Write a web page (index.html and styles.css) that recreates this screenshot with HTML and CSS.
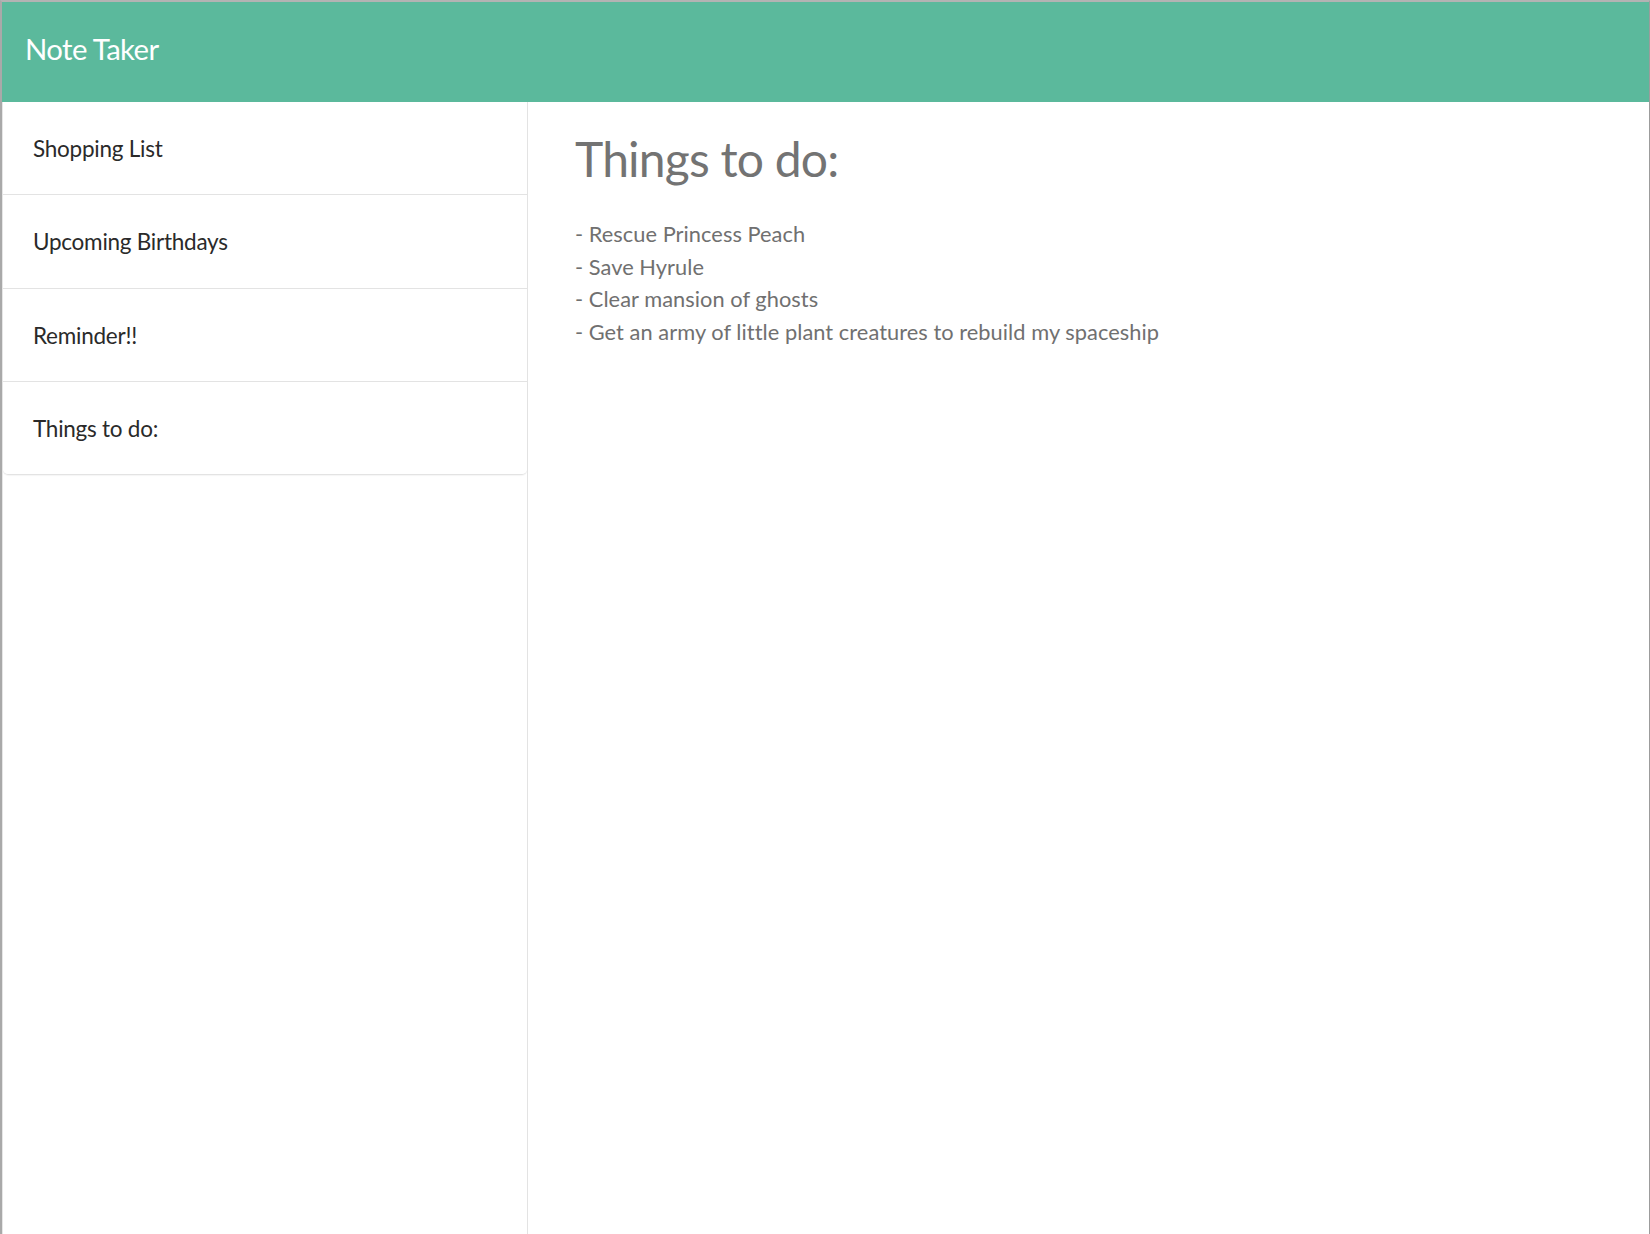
FILE: index.html
```html
<!DOCTYPE html>
<html lang="en">
<head>
<meta charset="utf-8">
<title>Note Taker</title>
<link rel="stylesheet" href="styles.css">
</head>
<body>
<div class="frame">
  <header class="navbar">
    <span class="brand">Note Taker</span>
  </header>
  <div class="content">
    <aside class="sidebar">
      <ul class="note-list">
        <li class="note-item">Shopping List</li>
        <li class="note-item">Upcoming Birthdays</li>
        <li class="note-item">Reminder!!</li>
        <li class="note-item">Things to do:</li>
      </ul>
    </aside>
    <main class="note-view">
      <h1 class="note-title">Things to do:</h1>
      <div class="note-body">
        <p class="note-line">- Rescue Princess Peach</p>
        <p class="note-line">- Save Hyrule</p>
        <p class="note-line">- Clear mansion of ghosts</p>
        <p class="note-line">- Get an army of little plant creatures to rebuild my spaceship</p>
      </div>
    </main>
  </div>
</div>
</body>
</html>
```

FILE: styles.css
```css
* {
  box-sizing: border-box;
}

html, body {
  margin: 0;
  padding: 0;
  height: 100%;
  background: #ffffff;
}

body {
  font-family: Lato, "Open Sans", "Liberation Sans", sans-serif;
}

.frame {
  height: 1234px;
  display: flex;
  flex-direction: column;
  border-top: 2px solid #b3b3b3;
  border-left: 2px solid #a9a9a9;
  border-right: 1px solid #9c9c9c;
}

.navbar {
  height: 100px;
  flex: 0 0 100px;
  background: #5bb99c;
  display: flex;
  align-items: center;
  padding-left: 23px;
  padding-bottom: 7px;
}

.brand {
  color: #ffffff;
  font-size: 29.3px;
  font-weight: 400;
  letter-spacing: -0.6px;
}

.content {
  flex: 1;
  display: flex;
  min-height: 0;
}

.sidebar {
  width: 526px;
  flex: 0 0 526px;
  border-left: 1px solid #e6e6e6;
  border-right: 1px solid #e3e3e3;
}

.note-list {
  list-style: none;
  margin: 0;
  padding: 0;
}

.note-item {
  height: 93.3px;
  display: flex;
  align-items: center;
  padding-left: 30px;
  padding-top: 1px;
  border-bottom: 1px solid #e3e3e3;
  font-size: 22.5px;
  letter-spacing: -0.25px;
  color: #2a2a2a;
}

.note-item:last-child {
  border-bottom-left-radius: 5px;
  border-bottom-right-radius: 5px;
  box-shadow: 0 1px 1px rgba(0, 0, 0, 0.04);
}

.note-view {
  flex: 1;
  padding: 29px 0 0 47px;
}

.note-title {
  margin: 0;
  font-size: 48px;
  line-height: 55px;
  font-weight: 400;
  letter-spacing: -0.8px;
  color: #737373;
}

.note-body {
  margin-top: 32px;
}

.note-line {
  margin: 0;
  font-size: 21.8px;
  line-height: 32.5px;
  letter-spacing: 0.05px;
  color: #707070;
}
```
